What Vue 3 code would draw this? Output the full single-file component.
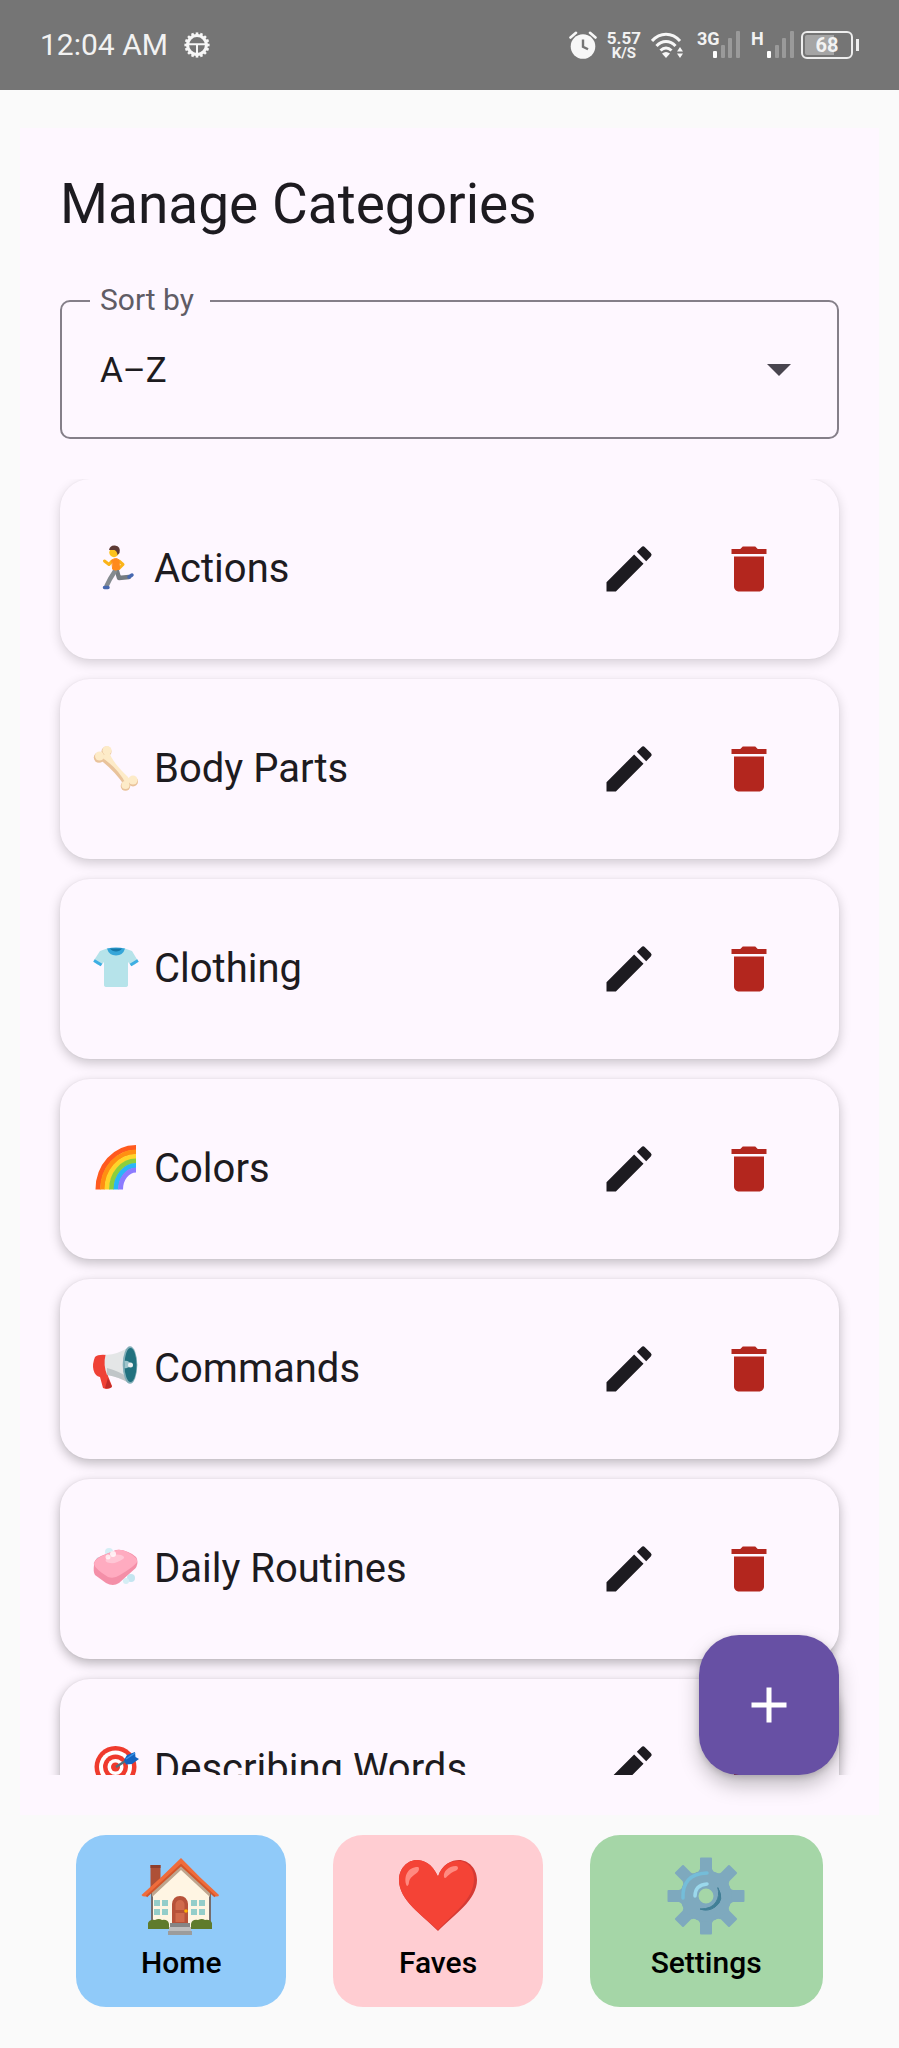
<script setup>
import { ref } from 'vue'

const sortBy = ref('az')
const categories = ref([
  { id: 'actions', name: 'Actions' },
  { id: 'body', name: 'Body Parts' },
  { id: 'clothing', name: 'Clothing' },
  { id: 'colors', name: 'Colors' },
  { id: 'commands', name: 'Commands' },
  { id: 'routines', name: 'Daily Routines' },
  { id: 'describing', name: 'Describing Words' },
])
const teeth = [0, 45, 90, 135, 180, 225, 270, 315]
const cogs = Array.from({ length: 16 }, (_, i) => i * 22.5)
const rainbow = ['#ff5a1f', '#ff8f12', '#ffd42a', '#8ccf3c', '#29b6f6', '#8c7bff']
const networks = ['3G', 'H']
</script>

<template>
  <div class="screen">
    <header class="status">
      <div class="status-left">
        <span class="time">12:04 AM</span>
        <svg class="cog" viewBox="0 0 26 26" aria-hidden="true">
          <g stroke="#f7f7f7" fill="none">
            <circle cx="13" cy="13" r="9.4" stroke-width="3" />
            <path d="M4 12.2h18M13 12.5V22" stroke-width="2" />
            <path v-for="a in cogs" :key="a" d="M13 3.2V.4" stroke-width="2.6" :transform="`rotate(${a} 13 13)`" />
          </g>
        </svg>
      </div>
      <div class="status-right">
        <svg class="alarm" viewBox="0 0 28 28" aria-hidden="true">
          <circle cx="14" cy="15.5" r="12.3" fill="#f7f7f7" />
          <path d="M1.5 6.5 7 1.8M26.5 6.5 21 1.8" stroke="#f7f7f7" stroke-width="2.6" stroke-linecap="round" />
          <path d="M14 8.5v7.2l5 2.6" fill="none" stroke="#757575" stroke-width="2.4" />
        </svg>
        <div class="speed"><b class="rate">5.57</b><b class="unit">K/S</b></div>
        <svg class="wifi" viewBox="0 0 32 28" aria-hidden="true">
          <g fill="none" stroke="#f7f7f7" stroke-width="3">
            <path d="M1 10C9 1 21 1 29 10" />
            <path d="M5.5 15C11 9 19 9 24.5 15" />
            <path d="M9.5 19.5C13 16 17 16 20.5 19.5" />
          </g>
          <path d="m11 22.5 4 4.5 4-4.5q-4-3-8 0Z" fill="#f7f7f7" />
          <path d="m29 16 3 4.500h-6ZM29 27l3-4.500h-6Z" fill="#f7f7f7" />
        </svg>
        <div v-for="n in networks" :key="n" class="network">
          <b class="network-name">{{ n }}</b>
          <svg class="bars" viewBox="0 0 28 28" aria-hidden="true">
            <rect x="0" y="20" width="4" height="7" rx="1" fill="#fff" />
            <g fill="#9a9a9a">
              <rect x="8" y="14" width="4" height="13" rx="1" />
              <rect x="15" y="7" width="4" height="20" rx="1" />
              <rect x="23" y="0" width="4" height="27" rx="1" />
            </g>
          </svg>
        </div>
        <div class="battery"><span class="level">68</span></div>
      </div>
    </header>

    <main class="panel">
      <h1>Manage Categories</h1>
      <div class="field">
        <label for="sort">Sort by</label>
        <select id="sort" v-model="sortBy">
          <option value="az">A–Z</option>
          <option value="za">Z–A</option>
        </select>
        <svg class="caret" viewBox="0 0 24 12" aria-hidden="true"><path d="M0 0h24L12 12Z" fill="#49454f" /></svg>
      </div>

      <ul class="list">
        <li v-for="(c, i) in categories" :key="c.id" class="card" :style="{ '--shade': 0.16 + i * 0.025 }">
          <svg class="emoji" viewBox="0 0 48 48" aria-hidden="true">
            <g v-if="c.id === 'actions'" fill="none" stroke-linecap="round" stroke-linejoin="round">
              <path d="m25 26 2 7 10-1" stroke="#757b80" stroke-width="4.500" />
              <path d="m23 26-5 8-3.500 7" stroke="#858b90" stroke-width="4.500" />
              <path d="m37 32 3-2M12.500 42.500h3.500" stroke="#4768b0" stroke-width="3.500" />
              <path d="m20 16-3 3.500-4.500-3.500" stroke="#fbb41a" stroke-width="3" />
              <path d="m27 16 4 3.500-4 4" stroke="#fbb41a" stroke-width="3" />
              <path d="M20 15q4-3 7 0l.5 9q-4 2-6.500.500Z" fill="#ff8a1c" stroke="#ff8a1c" />
              <circle cx="22" cy="7.500" r="4.700" fill="#fcc21b" />
              <path d="M17 5q1-5 6-4.500 6 .500 4.500 7.500l-2 2q-.500-4-3-5Z" fill="#5d3a35" />
            </g>
            <g v-else-if="c.id === 'body'">
              <g fill="#e9c39b">
                <circle cx="7" cy="12.500" r="5.200" /><circle cx="14.500" cy="6.500" r="5" />
                <circle cx="41" cy="36.500" r="5" /><circle cx="33.500" cy="41" r="4.800" />
                <path d="m7 14 6-6q9 15 25 27l-5 6Q21 24 7 14Z" />
              </g>
              <g fill="#fdebc8">
                <circle cx="7.500" cy="11" r="4.500" /><circle cx="15" cy="5.500" r="4.500" />
                <circle cx="41" cy="35" r="4.500" /><circle cx="33.500" cy="40" r="4" />
                <path d="m9 12 8-6q2 10 19 26l3 5-5 2q-8-16-25-27Z" />
              </g>
            </g>
            <g v-else-if="c.id === 'clothing'">
              <path d="M15 3.500 8 6 1.500 16q3 4 7 5L12 17v23q0 2 3 2h18q3 0 3-2V17l3.500 4q4-1 6.500-5L40 6l-7-2.500Z" fill="#b6e3ea" />
              <path d="M15 3.500q9-2 18 0-2 7-9 7t-9-7Z" fill="#35a5d8" />
              <path d="M18 3.500h12q-2 3-6 3t-6-3Z" fill="#1678a8" />
              <path d="m2 15.500 7.500 4.500M46 15.500 38.500 20" stroke="#3daee3" stroke-width="3" />
            </g>
            <g v-else-if="c.id === 'colors'" fill="none" stroke-width="5">
              <path
                v-for="(color, n) in rainbow" :key="color" :stroke="color"
                :d="`M${6 + n * 4.5} 44.5A${38 - n * 4.5} ${42 - n * 4.5} 0 0 1 44 ${2.5 + n * 4.5}`"
              />
            </g>
            <g v-else-if="c.id === 'commands'">
              <path d="M3 12q3-3 12-2l1 21 4 10q-1 3-6 3l-3-1-3-11q-5-1-6.500-7T3 12Z" fill="#ef4136" />
              <path d="m16 33 4 9q-3 2-7 1Z" fill="#c12d29" />
              <path d="M13.500 10Q27 9 37 2v36q-10-6-22-8-4-10-1.500-20Z" fill="#e4e6e7" />
              <path d="M15 23q12 3 22 10v5q-10-6-22-8Z" fill="#c0c5c8" />
              <ellipse cx="38" cy="20" rx="7.300" ry="18.800" fill="#82aeb8" />
              <ellipse cx="38.500" cy="20" rx="6" ry="17" fill="#22717f" />
              <path d="M32.500 16q4-1 7 4-3 4-7 3Z" fill="#9fc5cc" />
              <circle cx="38.500" cy="20" r="2.500" fill="#eceff1" />
            </g>
            <g v-else-if="c.id === 'routines'">
              <circle cx="17" cy="7" r="4" fill="#d5eef5" /><circle cx="39" cy="33" r="4" fill="#c4e5f0" />
              <circle cx="34" cy="36" r="3" fill="#d5eef5" /><circle cx="7" cy="15" r="3" fill="#d5eef5" />
              <path d="M2 20Q1 15 9 11L24 5q5-1 12 2 10 4 9.500 10 0 5-4 8L27 38q-6 4-13 0L3 30q-2-3-1-10Z" fill="#f48fa8" />
              <path d="M2 19q0-4 8-8l15-6q5-1 12 3 9 5 8 9-2 4-17 13-6 4-12 2Q3 24 2 19Z" fill="#ffabc0" />
              <path d="M14 14q7-6 15-4 5 2 2 4-7 5-13 4-6-1-4-4Z" fill="#ffc6d5" />
              <circle cx="21" cy="9" r="3" fill="#fff" opacity=".8" /><circle cx="16" cy="12" r="2.500" fill="#fff" opacity=".7" />
            </g>
            <g v-else>
              <circle cx="23.500" cy="22" r="21" fill="#ef3b2d" />
              <circle cx="23.500" cy="22" r="16.500" fill="#fff" />
              <circle cx="23.500" cy="22" r="12.500" fill="#ef3b2d" />
              <circle cx="23.500" cy="22" r="8" fill="#fff" />
              <circle cx="23.500" cy="22" r="4.500" fill="#ef3b2d" />
              <path d="m24 22 11-7" stroke="#546e7a" stroke-width="2.500" />
              <path d="m32 15 3-5 8-3 .5 5 3.500 2-7 5-6 .500Z" fill="#1565c0" />
              <path d="m34 14 9-6" stroke="#3c96e8" stroke-width="1.500" />
            </g>
          </svg>
          <span class="name">{{ c.name }}</span>
          <button class="icon-button" type="button" :aria-label="`Edit ${c.name}`">
            <svg viewBox="0 0 24 24"><path fill="#1d1b20" d="M3 17.250V21h3.750L17.810 9.940l-3.750-3.750L3 17.250zM20.710 7.040a1 1 0 0 0 0-1.410l-2.340-2.340a1 1 0 0 0-1.410 0l-1.830 1.830 3.750 3.750 1.830-1.830z" /></svg>
          </button>
          <button class="icon-button" type="button" :aria-label="`Delete ${c.name}`">
            <svg viewBox="0 0 24 24"><path fill="#b3261e" d="M6 19c0 1.100.9 2 2 2h8c1.100 0 2-.9 2-2V7H6v12zM19 4h-3.500l-1-1h-5l-1 1H5v2h14V4z" /></svg>
          </button>
        </li>
      </ul>

      <button class="fab" type="button" aria-label="Add category">
        <svg viewBox="0 0 24 24"><path fill="#fff" d="M19 13h-6v6h-2v-6H5v-2h6V5h2v6h6v2z" /></svg>
      </button>
    </main>

    <nav class="nav">
      <button class="tab home" type="button">
        <svg viewBox="0 0 88 80" aria-hidden="true">
          <path d="M13.500 8h10v22h-10Z" fill="#ae5036" /><path d="M13.500 8h10v3h-10Z" fill="#8f3f2c" />
          <path d="M15 36 44 9l29 27v34H15Z" fill="#fff5e3" />
          <path d="M15 36v30M73 36v30" stroke="#766c6c" stroke-width="2" />
          <path d="M15 40 44 13l29 27v-7L44 8 15 33Z" fill="#bda58e" />
          <path d="M44 1Q25 20 4.500 38q1 2 5 1.500L44 9l34 30.500q4 .5 4-1.500Q62 20 44 1Z" fill="#ef6c3b" />
          <path d="M9.500 39.500 44 8l34 31.500" fill="none" stroke="#d2552b" stroke-width="1.800" />
          <g fill="#94cdca"><path d="M17 43h6v6h-6ZM25 43h6v6h-6ZM17 52h6v6h-6ZM25 52h6v6h-6ZM54 43h6v6h-6ZM62 43h6v6h-6ZM54 52h6v6h-6ZM62 52h6v6h-6Z" /></g>
          <path d="M35 67V47q1-8 8-8t8 8v20Z" fill="#b75239" />
          <path d="M38.500 53v-6q1-4 4.500-4t4.500 4v6ZM38.500 56h9v9h-9Z" fill="#d06a4b" />
          <circle cx="49" cy="54" r="1.800" fill="#ffb300" />
          <path d="M11 72V66q2-4 7-3 4-2 7 0 6-1 7 4v5ZM54 72v-5q1-5 7-4 4-2 7 0 5-1 7 3v6Z" fill="#5f7b2c" />
          <path d="M33 66h20v4H33Z" fill="#858585" /><path d="M32 70h22v4H32Z" fill="#bdbdbd" /><path d="M31 74h24v4H31Z" fill="#9c9c9c" />
        </svg>
        <span>Home</span>
      </button>
      <button class="tab faves" type="button">
        <svg viewBox="0 0 88 80" aria-hidden="true">
          <path d="M44 19.500C38 6 29 3 23 3 13 3 5 12 5 23c0 20 23 35 39 51 16-16 39-31 39-51C83 12 75 3 65 3c-7 0-17 4-21 16.500Z" fill="#d53a34" />
          <path d="M44 19.500C38 6 29 3 23 3 13 3 5 12 5 23c0 20 23 35 39 50 15-16 36-31 36-51C80 12 74 4 64 4c-8 0-16 4-20 15.500Z" fill="#f44336" />
          <path d="M24 10c-11 0-14 10-12 17 1 4 3 1 3-2 1-7 10-8 10-13q0-2-1-2ZM62 9c-8 0-13 6-12 11 1 3 3-1 6-3 3-3 8-3 8-6q0-2-2-2Z" fill="#ff8a80" />
        </svg>
        <span>Faves</span>
      </button>
      <button class="tab settings" type="button">
        <svg viewBox="0 0 88 80" aria-hidden="true">
          <g fill="#7ea9be">
            <path
              v-for="a in teeth" :key="a" :transform="`rotate(${a} 44 39)`"
              d="M38 1.500q0-1 1-1h10q1 0 1 1V12q1 3 4 4l-4 9H38l-4-9q3-1 4-4Z"
            />
          </g>
          <circle cx="44" cy="39" r="16.500" fill="none" stroke="#7ea9be" stroke-width="18" />
          <g fill="none" stroke-linecap="round">
            <path d="M21 41Q20 17 45 16" stroke="#74bdd9" stroke-width="3.500" />
            <path d="M33 39q0-11 12-12" stroke="#9bd8ec" stroke-width="3.500" />
            <path d="M56 31q7 12-3 19-7 5-15 2 12 0 16-7 4-6 2-14Z" fill="#417f96" stroke="#417f96" stroke-width="1" />
          </g>
        </svg>
        <span>Settings</span>
      </button>
    </nav>
  </div>
</template>

<style>
body { background: #fafafa; }
</style>

<style scoped>
.screen {
  display: flex;
  flex-direction: column;
  height: 100vh;
  font-family: Roboto, "Noto Sans", sans-serif;
  color: #1d1b20;
}
.screen * { box-sizing: border-box; }
svg { display: block; }
button { border: 0; padding: 0; background: none; font: inherit; color: inherit; cursor: pointer; }

.status {
  display: flex;
  justify-content: space-between;
  align-items: center;
  flex: none;
  height: 90px;
  padding: 0 40px;
  background: #757575;
  color: #f2f2f2;
}
.status-left { display: flex; align-items: center; gap: 16px; }
.time { font-size: 30px; line-height: 40px; }
.cog { width: 26px; height: 26px; }
.status-right { display: flex; align-items: center; gap: 10px; }
.alarm { width: 28px; height: 28px; }
.speed { display: flex; flex-direction: column; align-items: center; }
.rate { font-size: 17px; line-height: 16px; }
.unit { font-size: 15px; line-height: 14px; }
.wifi { width: 32px; height: 28px; margin-right: 4px; }
.network { display: grid; width: 44px; }
.network > * { grid-area: 1 / 1; }
.network-name { align-self: start; font-size: 18px; line-height: 16px; }
.bars { justify-self: end; width: 28px; height: 28px; }
.battery {
  display: flex;
  align-items: center;
  width: 58px;
  margin-left: -4px;
  background: linear-gradient(#eee, #eee) right center / 3px 12px no-repeat;
  padding-right: 6px;
}
.level {
  flex: 1;
  border: 2px solid #eee;
  border-radius: 6px;
  background: linear-gradient(90deg, #a5a5a5 66%, transparent 66%) content-box;
  padding: 2px;
  font-size: 20px;
  font-weight: 700;
  line-height: 20px;
  text-align: center;
}

.panel {
  position: relative;
  display: flex;
  flex-direction: column;
  flex: 1;
  min-height: 0;
  margin: 38px 20px 0;
  padding: 40px;
  background: #fef7ff;
}
h1 { margin: 0 0 60px; font-size: 55px; font-weight: 400; line-height: 72px; }

.field { position: relative; flex: none; margin-bottom: 40px; }
.field label {
  position: absolute;
  top: -20px;
  left: 30px;
  padding: 0 16px 0 10px;
  background: #fef7ff;
  color: #605c65;
  font-size: 30px;
  line-height: 40px;
}
.field select {
  display: block;
  width: 100%;
  height: 139px;
  padding: 2px 38px 0;
  border: 2px solid #857f89;
  border-radius: 10px;
  background: none;
  appearance: none;
  color: #1d1b20;
  font: 400 35px/50px Roboto, "Noto Sans", sans-serif;
}
.caret { position: absolute; top: 64px; right: 48px; width: 24px; height: 12px; pointer-events: none; }

.list {
  display: flex;
  flex-direction: column;
  gap: 20px;
  flex: 1;
  min-height: 0;
  margin: 0 -20px;
  padding: 0 20px;
  list-style: none;
  overflow-y: auto;
  scrollbar-width: none;
}
.card {
  display: flex;
  align-items: center;
  flex: none;
  height: 180px;
  padding: 0 30px 0 32px;
  border-radius: 30px;
  background: #fef7ff;
  box-shadow: 0 4px 12px rgb(0 0 0 / var(--shade)), 0 0 2px rgb(0 0 0 / 0.06);
}
.emoji { flex: none; width: 48px; height: 48px; margin-right: 14px; }
.name { flex: 1; font-size: 40px; line-height: 60px; }
.icon-button { display: grid; place-items: center; width: 120px; height: 120px; }
.icon-button svg, .fab svg { width: 60px; height: 60px; }

.fab {
  position: absolute;
  right: 40px;
  bottom: 40px;
  display: grid;
  place-items: center;
  width: 140px;
  height: 140px;
  border-radius: 40px;
  background: #6750a4;
  box-shadow: 0 10px 20px rgb(0 0 0 / 0.25), 0 2px 6px rgb(0 0 0 / 0.15);
}

.nav {
  display: flex;
  justify-content: space-around;
  flex: none;
  padding: 20px 53px 41px;
}
.tab {
  display: flex;
  flex-direction: column;
  align-items: center;
  gap: 8px;
  padding: 22px 61px 26px;
  border-radius: 30px;
  color: #000;
  font-size: 30px;
  font-weight: 500;
  line-height: 36px;
}
.tab svg { width: 88px; height: 80px; }
.home { background: #90caf9; }
.faves { background: #ffcdd2; }
.settings { background: #a5d6a7; }
</style>
